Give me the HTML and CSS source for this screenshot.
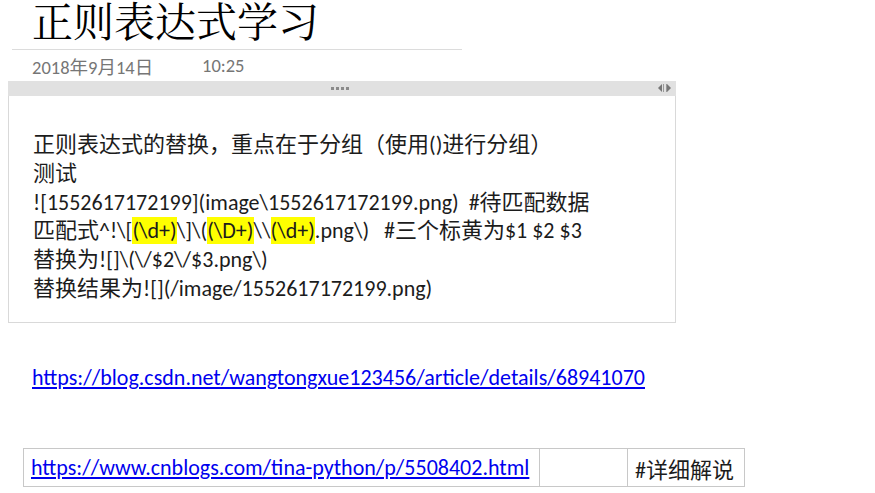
FILE: index.html
```html
<!DOCTYPE html>
<html lang="zh-CN">
<head>
<meta charset="utf-8">
<title>正则表达式学习</title>
<link rel="stylesheet" href="styles.css">
</head>
<body>
<div class="page">
  <h1 class="title">正则表达式学习</h1>
  <div class="divider"></div>
  <div class="meta"><span class="date">2018年9月14日</span><span class="time">10:25</span></div>

  <div class="box">
    <div class="box-bar">
      <div class="dots"><i></i><i></i><i></i><i></i></div>
      <div class="arrows">
        <svg width="14" height="10" viewBox="0 0 14 10"><path d="M4 1 L0 5 L4 9 Z" fill="#777"/><rect x="5" y="1" width="1" height="8" fill="#999"/><path d="M9 1 L13 5 L9 9 Z" fill="#777"/><rect x="8" y="1" width="1" height="8" fill="#999"/></svg>
      </div>
    </div>
    <div class="box-body">
      <p>正则表达式的替换，重点在于分组（使用()进行分组）</p>
      <p>测试</p>
      <p>![1552617172199](image\1552617172199.png)&nbsp; #待匹配数据</p>
      <p>匹配式^!\[<mark>(\d+)</mark>\]\(<mark>(\D+)</mark>\\<mark>(\d+)</mark>.png\)&nbsp;&nbsp; #三个标黄为$1 $2 $3</p>
      <p>替换为![]\(\/$2\/$3.png\)</p>
      <p>替换结果为![](/image/1552617172199.png)</p>
    </div>
  </div>

  <p class="link-line"><a href="#">https://blog.csdn.net/wangtongxue123456/article/details/68941070</a></p>

  <table class="links">
    <tr>
      <td class="c1"><a href="#">https://www.cnblogs.com/tina-python/p/5508402.html</a></td>
      <td class="c2"></td>
      <td class="c3">#详细解说</td>
    </tr>
  </table>
</div>
</body>
</html>
```

FILE: styles.css
```css
html, body {
  margin: 0;
  padding: 0;
  background: #fff;
}
body {
  font-family: "Carlito", "Liberation Sans", "Noto Sans CJK SC", sans-serif;
  color: #1c1c1c;
}
.page {
  width: 875px;
}
.title {
  margin: 0;
  padding: 0 0 0 32px;
  font-family: "Noto Serif CJK SC", "Noto Sans CJK SC", serif;
  font-weight: normal;
  font-size: 41px;
  line-height: 40px;
  height: 49px;
  color: #000;
}
.divider {
  margin-left: 12px;
  width: 450px;
  border-top: 1px solid #dcdcdc;
}
.meta {
  display: flex;
  padding-left: 32px;
  height: 31px;
  align-items: center;
  font-size: 18.5px;
  color: #767676;
}
.date {
  width: 170px;
}
.box {
  margin-left: 8px;
  width: 666px;
  height: 241px;
  border: 1px solid #d9d9d9;
  border-top: none;
}
.box-bar {
  height: 15px;
  background: #e1e1e1;
  margin-left: -1px;
  margin-right: -1px;
  position: relative;
  display: flex;
  justify-content: center;
  align-items: center;
}
.dots {
  display: flex;
  gap: 2px;
  margin-left: -4px;
}
.dots i {
  display: block;
  width: 3px;
  height: 3px;
  background: #8a8a8a;
}
.arrows {
  position: absolute;
  right: 4px;
  top: 2px;
  height: 10px;
}
.arrows svg { display: block; }
.box-body {
  padding: 35px 0 0 24px;
  font-size: 22px;
  line-height: 28.8px;
}
.box-body p {
  margin: 0;
  white-space: nowrap;
}
mark {
  background: #ffff00;
  color: inherit;
}
a {
  color: #0000ee;
  text-decoration: underline;
}
.link-line {
  margin: 0;
  padding: 41px 0 0 32px;
  font-size: 22px;
  line-height: 28px;
}
.links {
  margin: 56px 0 0 23px;
  border-collapse: collapse;
  font-size: 22px;
}
.links td {
  border: 1px solid #c8c8c8;
  height: 37px;
  padding: 0 7px;
  white-space: nowrap;
}
.links .c1 { width: 501px; }
.links .c2 { width: 73px; }
.links .c3 { width: 102px; }
```
